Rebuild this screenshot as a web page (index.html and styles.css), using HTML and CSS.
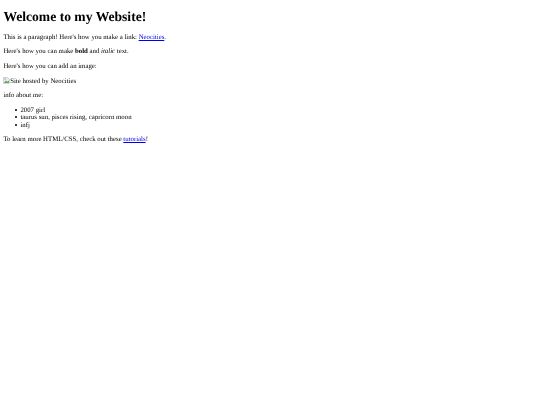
FILE: index.html
```html
<!DOCTYPE html>
<html lang="en">
<head>
    <meta charset="UTF-8">
    <title>Welcome to my Website!</title>
    <link rel="stylesheet" href="styles.css">
</head>
<body>
    <h1>Welcome to my Website!</h1>
    <p>This is a paragraph! Here's how you make a link: <a href="#">Neocities</a>.</p>
    <p>Here's how you can make <strong>bold</strong> and <em>italic</em> text.</p>
    <p>Here's how you can add an image:</p>
    <p class="broken-image">
        <svg class="broken-icon" viewBox="0 0 16 16" width="6.8" height="6.8">
            <path d="M1 1h10l4 4v10H1z" fill="#e8eef0" stroke="#9a9a9a"/>
            <path d="M2 14l5-6 3 3 4-3v6z" fill="#5aa85a"/>
            <path d="M3 3h4v3H3z" fill="#8ab4e8"/>
        </svg>Site hosted by Neocities
    </p>
    <p>info about me:</p>
    <ul>
        <li>2007 girl</li>
        <li>taurus sun, pisces rising, capricorn moon</li>
        <li>infj</li>
    </ul>
    <p>To learn more HTML/CSS, check out these <a href="#">tutorials</a>!</p>
</body>
</html>
```

FILE: styles.css
```css
html {
    background: #fff;
}

body {
    margin: 3.4px;
    font-family: "Liberation Serif", "Times New Roman", serif;
    font-size: 6.8px;
    line-height: 7.65px;
    color: #000;
    text-rendering: geometricPrecision;
    filter: blur(0.25px);
}

h1 {
    margin: 5.4px 0 9.2px;
    font-size: 13.6px;
    line-height: 15.7px;
}

p {
    margin: 6.8px 0;
}

a {
    color: #00e;
}

ul {
    margin: 6.8px 0;
    padding-left: 17px;
    list-style: none;
}

li {
    height: 7.5px;
}

li::before {
    content: "";
    display: inline-block;
    width: 2.2px;
    height: 2.2px;
    margin: 0 3.2px 0 -5.4px;
    border-radius: 50%;
    background: #000;
    vertical-align: 1px;
}

.broken-icon {
    vertical-align: -1px;
}
```
